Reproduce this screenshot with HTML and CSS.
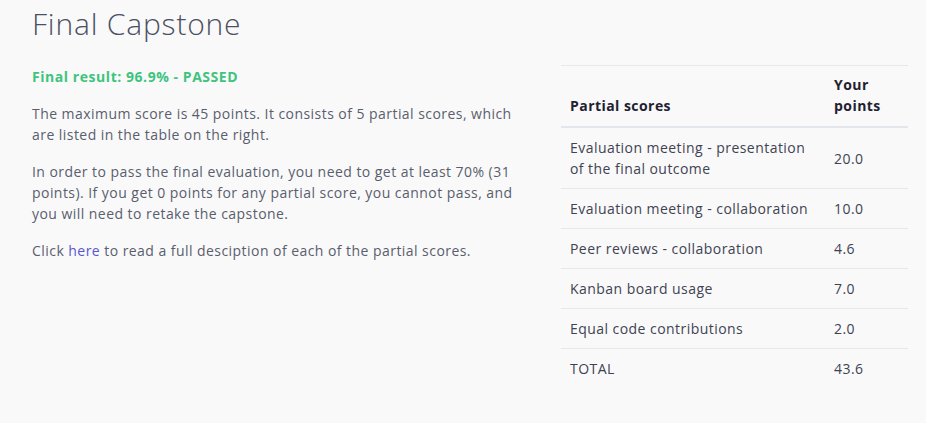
FILE: index.html
```html
<!DOCTYPE html>
<html lang="en">
<head>
<meta charset="utf-8">
<title>Final Capstone</title>
<link rel="stylesheet" href="styles.css">
</head>
<body>
<main class="page">
  <h1 class="title">Final Capstone</h1>
  <div class="columns">
    <section class="intro">
      <p class="result">Final result: 96.9% - PASSED</p>
      <p>The maximum score is 45 points. It consists of 5 partial scores, which are listed in the table on the right.</p>
      <p>In order to pass the final evaluation, you need to get at least 70% (31 points). If you get 0 points for any partial score, you cannot pass, and you will need to retake the capstone.</p>
      <p>Click <a href="#" class="link">here</a> to read a full desciption of each of the partial scores.</p>
    </section>
    <section class="scores">
      <table class="score-table">
        <thead>
          <tr><th class="col-name">Partial scores</th><th class="col-points">Your points</th></tr>
        </thead>
        <tbody>
          <tr><td>Evaluation meeting - presentation of the final outcome</td><td>20.0</td></tr>
          <tr><td>Evaluation meeting - collaboration</td><td>10.0</td></tr>
          <tr><td>Peer reviews - collaboration</td><td>4.6</td></tr>
          <tr><td>Kanban board usage</td><td>7.0</td></tr>
          <tr><td>Equal code contributions</td><td>2.0</td></tr>
          <tr><td>TOTAL</td><td>43.6</td></tr>
        </tbody>
      </table>
    </section>
  </div>
</main>
</body>
</html>
```

FILE: styles.css
```css
html, body {
  margin: 0;
  padding: 0;
  background: #f9f9fa;
}
body {
  font-family: "Open Sans", "DejaVu Sans", sans-serif;
  font-size: 14px;
  line-height: 21px;
  letter-spacing: 0.45px;
  color: #5a5e6d;
}
.page {
  padding: 4px 18px 0 32px;
}
.title {
  margin: 0;
  font-size: 30px;
  line-height: 40px;
  font-weight: 300;
  letter-spacing: 0.8px;
  color: #4b5062;
}
.columns {
  display: grid;
  grid-template-columns: 500px 1fr;
  gap: 29px;
  margin-top: 20px;
}
.intro p {
  margin: 0 0 16px;
}
.intro .result {
  margin: 2px 0 16px;
  font-weight: 700;
  letter-spacing: 0.55px;
  color: #3ec47d;
}
.link {
  color: #5757d1;
  text-decoration: none;
}
.score-table {
  width: 100%;
  margin-top: 1px;
  border-collapse: collapse;
  border-top: 1px solid #e6e8ec;
  color: #3f4351;
}
.score-table th {
  text-align: left;
  vertical-align: bottom;
  font-weight: 700;
  color: #1e2230;
  padding: 8px 8px 10px 9px;
  border-bottom: 2px solid #e3e6ea;
}
.score-table td {
  padding: 9px 8px 9px 9px;
  border-bottom: 1px solid #e6e8ec;
  vertical-align: middle;
}
.score-table tbody tr:last-child td {
  border-bottom: none;
}
.col-points {
  width: 66px;
}
```
